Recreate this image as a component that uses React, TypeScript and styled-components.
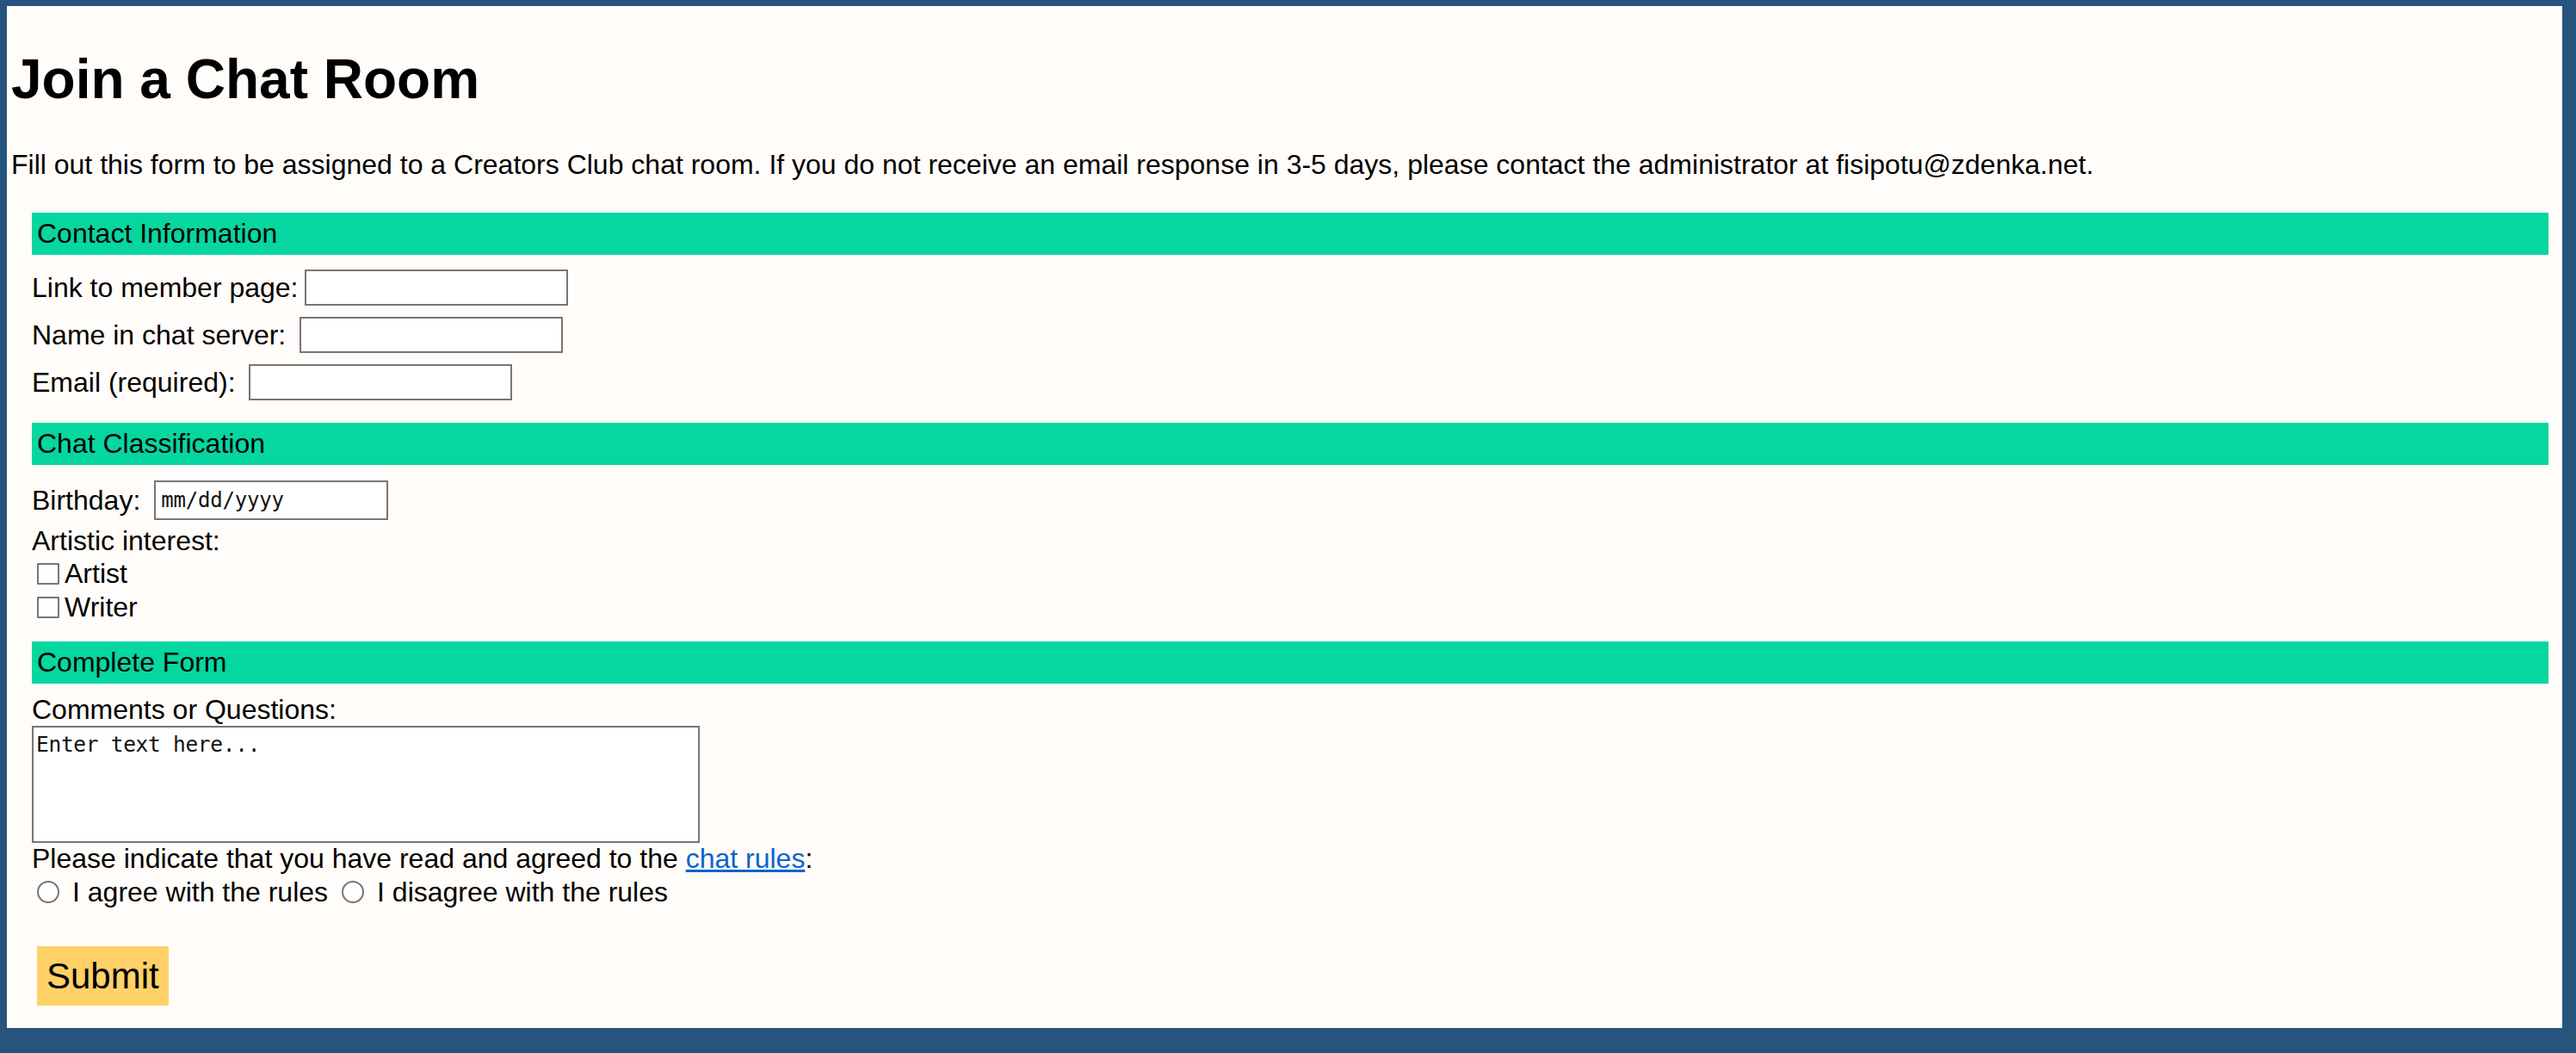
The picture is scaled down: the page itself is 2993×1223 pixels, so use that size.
import React from "react";
import styled, { createGlobalStyle } from "styled-components";

const GlobalStyle = createGlobalStyle`
  html, body {
    margin: 0;
    background: #26547c;
    overflow: hidden;
  }
  body {
    padding: 7px 16px 29px 8px;
    font-family: "Liberation Sans", Arial, sans-serif;
    font-size: 32px;
    color: #000;
  }
  * { box-sizing: border-box; }
`;

const Sheet = styled.main`
  background: #fffcf9;
  padding: 6px 5px 26px;
`;

const Title = styled.h1`
  margin: 43px 0;
  font-size: 64px;
  font-weight: 700;
  line-height: 73.5px;
`;

const Intro = styled.p`
  margin: 0 0 38px;
  line-height: 36.4px;
`;

const Form = styled.form`
  margin: 0 11px 0 24px;
`;

const SectionBar = styled.h2<{ $gap?: number }>`
  margin: ${(p) => p.$gap ?? 0}px 0 0;
  padding: 6px;
  background: #06d6a0;
  font-size: 32px;
  font-weight: 400;
  line-height: 37px;
`;

const FieldRow = styled.div<{ $top: number; $height: number }>`
  display: flex;
  align-items: center;
  height: ${(p) => p.$height}px;
  margin-top: ${(p) => p.$top}px;
`;

const Label = styled.label<{ $space: number }>`
  line-height: 36.4px;
  margin-right: ${(p) => p.$space}px;
  white-space: nowrap;
`;

const TextInput = styled.input`
  width: 306px;
  height: 42px;
  border: 2px solid #767676;
  background: #fff;
  padding: 0 6px;
  font: 24px "DejaVu Sans Mono", monospace;
`;

const DateInput = styled(TextInput)`
  width: 272px;
  height: 46px;
  padding: 0 6px;
  color: #111;
  letter-spacing: -0.2px;
`;

const Line = styled.div<{ $top?: number }>`
  line-height: 36.4px;
  margin-top: ${(p) => p.$top ?? 0}px;
`;

const CheckRow = styled.label`
  display: flex;
  align-items: center;
  height: 39.5px;
  padding-left: 6px;
  gap: 6px;
`;

const Box = styled.input`
  appearance: none;
  margin: 0;
  width: 26px;
  height: 25px;
  border: 2px solid #767676;
  border-radius: 1px;
  background: #fff;
`;

const Comments = styled.textarea`
  display: block;
  width: 776px;
  height: 136px;
  border: 2px solid #767676;
  background: #fff;
  padding: 6px 3px;
  resize: none;
  font: 24.5px/28px "DejaVu Sans Mono", monospace;
  letter-spacing: -0.3px;
  color: #111;
`;

const RuleLink = styled.a`
  color: #0a64cc;
  text-decoration: underline;
`;

const RadioRow = styled.div`
  display: flex;
  align-items: center;
  height: 42px;
  padding-left: 6px;
  gap: 16px;
`;

const RadioOption = styled.label`
  display: flex;
  align-items: center;
  gap: 15px;
  line-height: 36.4px;
`;

const Radio = styled.input`
  appearance: none;
  margin: 0;
  width: 26px;
  height: 26px;
  border: 2px solid #767676;
  border-radius: 50%;
  background: #fff;
`;

const SubmitButton = styled.button`
  display: block;
  margin: 42px 0 0 6px;
  height: 69px;
  padding: 0 11px;
  border: none;
  background: #ffd166;
  font-family: "Liberation Sans", Arial, sans-serif;
  font-size: 42px;
  color: #000;
`;

export default function App() {
  return (
    <>
      <GlobalStyle />
      <Sheet>
        <Title>Join a Chat Room</Title>
        <Intro>
          Fill out this form to be assigned to a Creators Club chat room. If you do not receive an
          email response in 3-5 days, please contact the administrator at fisipotu@zdenka.net.
        </Intro>
        <Form onSubmit={(e) => e.preventDefault()}>
          <SectionBar>Contact Information</SectionBar>
          <FieldRow $top={17} $height={42}>
            <Label $space={7} htmlFor="link">Link to member page:</Label>
            <TextInput id="link" type="text" />
          </FieldRow>
          <FieldRow $top={13} $height={42}>
            <Label $space={16} htmlFor="nick">Name in chat server:</Label>
            <TextInput id="nick" type="text" />
          </FieldRow>
          <FieldRow $top={13} $height={42}>
            <Label $space={15} htmlFor="email">Email (required):</Label>
            <TextInput id="email" type="email" required />
          </FieldRow>

          <SectionBar $gap={26}>Chat Classification</SectionBar>
          <FieldRow $top={18} $height={46}>
            <Label $space={16} htmlFor="bday">Birthday:</Label>
            <DateInput id="bday" type="text" defaultValue="mm/dd/yyyy" />
          </FieldRow>
          <Line $top={6}>Artistic interest:</Line>
          <CheckRow>
            <Box type="checkbox" name="interest" value="artist" />
            Artist
          </CheckRow>
          <CheckRow>
            <Box type="checkbox" name="interest" value="writer" />
            Writer
          </CheckRow>

          <SectionBar $gap={20}>Complete Form</SectionBar>
          <Line $top={12}>Comments or Questions:</Line>
          <Comments defaultValue="Enter text here..." />
          <Line>
            Please indicate that you have read and agreed to the{" "}
            <RuleLink href="#">chat rules</RuleLink>:
          </Line>
          <RadioRow>
            <RadioOption>
              <Radio type="radio" name="rules" value="agree" />
              I agree with the rules
            </RadioOption>
            <RadioOption>
              <Radio type="radio" name="rules" value="disagree" />
              I disagree with the rules
            </RadioOption>
          </RadioRow>
          <SubmitButton type="submit">Submit</SubmitButton>
        </Form>
      </Sheet>
    </>
  );
}
